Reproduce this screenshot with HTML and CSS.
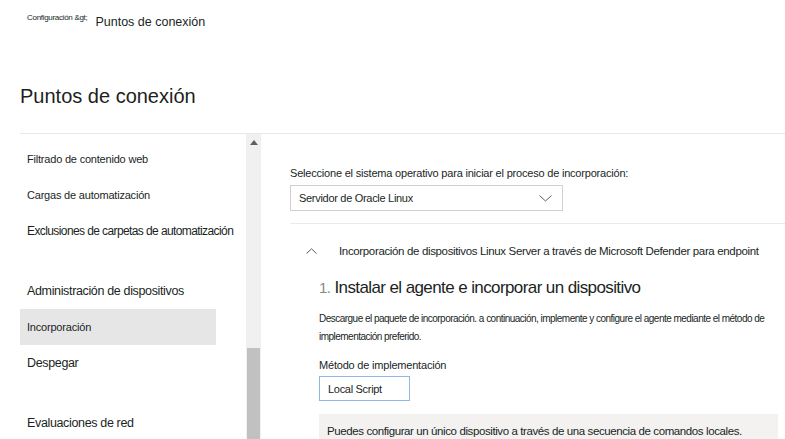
FILE: index.html
```html
<!DOCTYPE html>
<html lang="es">
<head>
<meta charset="utf-8">
<title>Puntos de conexión</title>
<link rel="stylesheet" href="styles.css">
</head>
<body>
<header class="crumbs">
  <span class="crumb-parent">Configuración &amp;gt;</span>
  <span class="crumb-current">Puntos de conexión</span>
</header>
<h1 class="page-title">Puntos de conexión</h1>
<div class="layout">
  <nav class="sidebar">
    <ul class="nav-list">
      <li class="nav-item small">Filtrado de contenido web</li>
      <li class="nav-item small">Cargas de automatización</li>
      <li class="nav-item tight">Exclusiones de carpetas de automatización</li>
      <li class="nav-item group">Administración de dispositivos</li>
      <li class="nav-item small selected">Incorporación</li>
      <li class="nav-item">Despegar</li>
      <li class="nav-item group">Evaluaciones de red</li>
    </ul>
  </nav>
  <div class="scrollbar">
    <div class="scroll-track">
      <svg class="scroll-arrow" width="8" height="5" viewBox="0 0 8 5"><path d="M0 5 L4 0 L8 5 Z" fill="#606060"/></svg>
    </div>
    <div class="scroll-thumb"></div>
  </div>
  <main class="content">
    <div class="os-picker">
      <label class="field-label">Seleccione el sistema operativo para iniciar el proceso de incorporación:</label>
      <div class="select">
        <span>Servidor de Oracle Linux</span>
        <svg class="select-chevron" width="13" height="7" viewBox="0 0 13 7"><path d="M0.5 0.5 L6.5 6 L12.5 0.5" fill="none" stroke="#605e5c" stroke-width="1"/></svg>
      </div>
    </div>
    <section class="accordion">
      <div class="accordion-head">
        <svg class="acc-chevron" width="11" height="6" viewBox="0 0 11 6"><path d="M0.5 5.5 L5.5 0.8 L10.5 5.5" fill="none" stroke="#605e5c" stroke-width="1"/></svg>
        <span class="acc-title">Incorporación de dispositivos Linux Server a través de Microsoft Defender para endpoint</span>
      </div>
      <div class="step">
        <h2 class="step-title"><span class="step-num">1.</span> Instalar el agente e incorporar un dispositivo</h2>
        <p class="step-desc"><span class="line">Descargue el paquete de incorporación. a continuación, implemente y configure el agente mediante el método de</span><br>implementación preferido.</p>
        <div class="field-label method-label">Método de implementación</div>
        <div class="method-box">Local Script</div>
        <div class="info-box">Puedes configurar un único dispositivo a través de una secuencia de comandos locales.</div>
      </div>
    </section>
  </main>
</div>
</body>
</html>
```
FILE: styles.css
```css
html, body {
  margin: 0;
  padding: 0;
  background: #ffffff;
  color: #201f1e;
  font-family: "Liberation Sans", Arial, sans-serif;
  overflow: hidden;
  height: 439px;
}

.crumbs {
  display: flex;
  align-items: flex-start;
  padding: 12px 0 0 27px;
  height: 24px;
}
.crumb-parent {
  font-size: 8px;
  letter-spacing: -0.3px;
  margin-top: 1px;
  margin-right: 8px;
}
.crumb-current {
  font-size: 12.5px;
  margin-top: 3px;
}

.page-title {
  margin: 48px 0 0 20px;
  font-size: 20px;
  font-weight: normal;
  line-height: 24px;
  height: 49px;
}

.layout {
  display: flex;
  margin-left: 20px;
  border-top: 1px solid #e8e8e8;
  height: 305px;
}

.sidebar {
  width: 226px;
  flex: none;
}
.nav-list {
  list-style: none;
  margin: 0;
  padding: 7px 0 0 0;
  width: 196px;
}
.nav-item {
  height: 36px;
  display: flex;
  align-items: center;
  padding-left: 7px;
  font-size: 12.5px;
  letter-spacing: -0.35px;
  white-space: nowrap;
}
.nav-item.small {
  font-size: 11px;
  letter-spacing: -0.2px;
}
.nav-item.tight {
  font-size: 12px;
  letter-spacing: -0.6px;
}
.nav-item.group {
  margin-top: 24px;
}
.nav-item.selected {
  background: #e6e6e6;
}

.scrollbar {
  width: 15px;
  flex: none;
  display: flex;
  flex-direction: column;
  background: #f0f0f0;
}
.scroll-track {
  height: 214px;
  display: flex;
  justify-content: center;
  padding-top: 6px;
  box-sizing: border-box;
}
.scroll-thumb {
  flex: 1;
  margin: 0 1px;
  background: #c1c1c1;
}

.content {
  flex: 1;
  padding: 32px 0 0 29px;
  min-width: 0;
}

.field-label {
  font-size: 11px;
  letter-spacing: -0.2px;
  line-height: 14px;
  display: block;
}
.select {
  margin-top: 5px;
  height: 24px;
  border: 1px solid #d2d0ce;
  display: flex;
  align-items: center;
  justify-content: space-between;
  padding: 0 8px;
  font-size: 11px;
  letter-spacing: -0.3px;
  box-sizing: content-box;
  width: 255px;
}
.select-chevron {
  margin-right: 2px;
}

.accordion {
  margin-top: 12px;
  border-top: 1px solid #edebe9;
}
.accordion-head {
  display: flex;
  align-items: center;
  height: 53px;
  padding-left: 16px;
}
.acc-chevron {
  margin-right: 22px;
  margin-top: 1px;
}
.acc-title {
  font-size: 11.5px;
  letter-spacing: -0.35px;
  color: #201f1e;
  white-space: nowrap;
}

.step {
  padding-left: 29px;
  padding-right: 7px;
}
.step-title {
  margin: 0;
  font-size: 17px;
  font-weight: normal;
  letter-spacing: -0.6px;
  line-height: 22px;
}
.step-num {
  color: #8a8886;
  font-size: 15px;
}
.step-desc {
  margin: 11px 0 0 0;
  font-size: 10px;
  letter-spacing: -0.52px;
  line-height: 18px;
}
.step-desc .line {
  white-space: nowrap;
}
.method-label {
  margin-top: 12px;
}
.method-box {
  margin-top: 4px;
  width: 91px;
  height: 25px;
  border: 1px solid #8fb8e8;
  box-sizing: border-box;
  display: flex;
  align-items: center;
  padding-left: 8px;
  font-size: 11px;
  letter-spacing: -0.3px;
}
.info-box {
  margin-top: 13px;
  background: #f3f2f1;
  height: 40px;
  padding: 11px 0 0 8px;
  box-sizing: border-box;
  font-size: 11.5px;
  letter-spacing: -0.4px;
}
```
